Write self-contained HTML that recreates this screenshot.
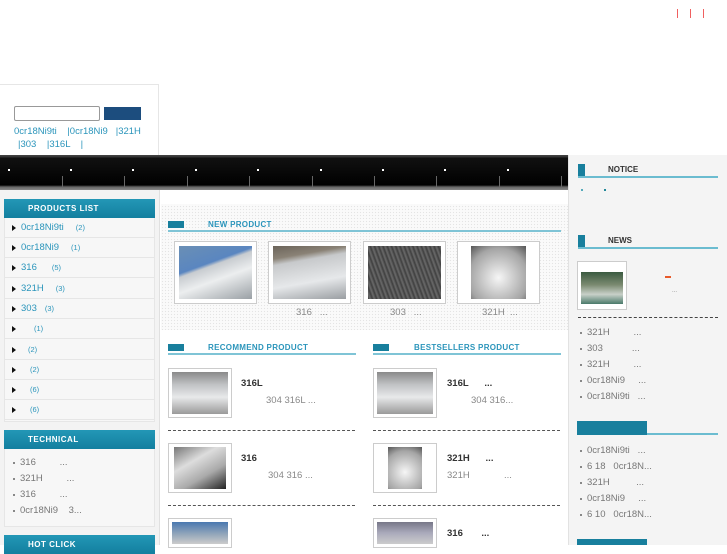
<!DOCTYPE html>
<html><head><meta charset="utf-8"><style>
*{margin:0;padding:0;box-sizing:border-box}
body{width:727px;height:545px;overflow:hidden;background:#fff;font-family:"Liberation Sans","Noto Sans CJK SC",sans-serif;font-size:9.5px;position:relative}
.a{position:absolute}
.t{color:#2b95bb}
.g{color:#888}
.hd{position:absolute;background:linear-gradient(#2397b6,#137f9f);color:#fff;font-weight:bold;font-size:8px;letter-spacing:.5px;padding-left:24px;line-height:19px;height:19px}
.row{position:absolute;left:5px;width:150px;height:20px;border-bottom:1px solid #e6e6e6;font-size:9.5px;line-height:20px}
.row:before{content:"";position:absolute;left:7px;top:7px;border-left:4px solid #111;border-top:3px solid transparent;border-bottom:3px solid transparent}
.li{position:absolute;color:#777;font-size:9.5px}
.li:before{content:"";position:absolute;left:-7px;top:5px;width:2px;height:2px;background:#888}
.sec{position:absolute;height:11px;border-bottom:2px solid #7fc4d6}
.sec b{position:absolute;left:0;top:0;width:16px;height:7px;background:#187f9d}
.sec span{position:absolute;top:-1px;font-size:8px;font-weight:bold;color:#2b95bb;letter-spacing:.3px}
.img{position:absolute;border:1px solid #ccc;background:#fff;padding:4px}
.img div{width:100%;height:100%}
.dash{position:absolute;height:0;border-top:1px dashed #555}
</style></head><body>
<div class="a" style="left:677px;top:9px;width:1px;height:9px;background:#f06060"></div>
<div class="a" style="left:690px;top:9px;width:1px;height:9px;background:#f06060"></div>
<div class="a" style="left:703px;top:9px;width:1px;height:9px;background:#f06060"></div>

<div class="a" style="left:0;top:84px;width:159px;height:72px;border:1px solid #e6e6e6;border-left:none;background:#fff"></div>
<div class="a" style="left:14px;top:106px;width:86px;height:15px;border:1px solid #999;border-radius:2px"></div>
<div class="a" style="left:104px;top:107px;width:37px;height:13px;background:#1c4d7e"></div>
<div class="a t" style="left:14px;top:126px;white-space:pre">0cr18Ni9ti    |0cr18Ni9   |321H</div>
<div class="a t" style="left:18px;top:139px;white-space:pre">|303    |316L    |</div>

<div class="a" style="left:0;top:155px;width:568px;height:35px;background:linear-gradient(#444 0,#333 2px,#111 3px,#000 30px,#666 32px,#888 35px)"></div>

<div class="a" style="left:568px;top:155px;width:159px;height:390px;background:#f4f4f4;border-left:1px solid #e2e2e2"></div>
<div class="a" style="left:0;top:190px;width:160px;height:355px;background:#f3f3f3;border-right:1px solid #e0e0e0"></div>
<div class="a" style="left:161px;top:190px;width:407px;height:140px;background-color:#fafafa;background-image:radial-gradient(#e4e4e4 0.7px,transparent 0.8px);background-size:3px 3px"></div>
<div class="a" style="left:161px;top:190px;width:407px;height:14px;background:#fff"></div>

<div class="hd" style="left:4px;top:199px;width:151px">PRODUCTS LIST</div>
<div class="a" style="left:4px;top:218px;width:151px;height:204px;background:#f7f7f7;border:1px solid #e6e6e6;border-top:none"></div>
<div class="row t" style="top:218px"><span style="margin-left:16px">0cr18Ni9ti</span><span style="margin-left:12px;font-size:7.5px">(2)</span></div>
<div class="row t" style="top:238px"><span style="margin-left:16px">0cr18Ni9</span><span style="margin-left:12px;font-size:7.5px">(1)</span></div>
<div class="row t" style="top:258px"><span style="margin-left:16px">316</span><span style="margin-left:15px;font-size:7.5px">(5)</span></div>
<div class="row t" style="top:279px"><span style="margin-left:16px">321H</span><span style="margin-left:12px;font-size:7.5px">(3)</span></div>
<div class="row t" style="top:299px"><span style="margin-left:16px">303</span><span style="margin-left:8px;font-size:7.5px">(3)</span></div>
<div class="row t" style="top:319px"><span style="margin-left:29px;font-size:7.5px">(1)</span></div>
<div class="row t" style="top:340px"><span style="margin-left:23px;font-size:7.5px">(2)</span></div>
<div class="row t" style="top:360px"><span style="margin-left:25px;font-size:7.5px">(2)</span></div>
<div class="row t" style="top:380px"><span style="margin-left:25px;font-size:7.5px">(6)</span></div>
<div class="row t" style="top:400px"><span style="margin-left:25px;font-size:7.5px">(6)</span></div>

<div class="hd" style="left:4px;top:430px;width:151px">TECHNICAL</div>
<div class="a" style="left:4px;top:449px;width:151px;height:78px;background:#f7f7f7;border:1px solid #e6e6e6;border-top:none"></div>
<div class="li" style="left:20px;top:457px;white-space:pre">316         ...</div>
<div class="li" style="left:20px;top:473px;white-space:pre">321H         ...</div>
<div class="li" style="left:20px;top:489px;white-space:pre">316         ...</div>
<div class="li" style="left:20px;top:505px;white-space:pre">0cr18Ni9    3...</div>
<div class="hd" style="left:4px;top:535px;width:151px">HOT CLICK</div>

<div class="sec" style="left:168px;top:221px;width:393px"><b></b><span style="left:40px">NEW PRODUCT</span></div>
<div class="img" style="left:174px;top:241px;width:83px;height:63px"><div style="background:linear-gradient(160deg,#6a8fb5 0,#5a86c0 35%,#c8ccd0 40%,#eceeef 60%,#9aa0a5 100%)"></div></div>
<div class="img" style="left:268px;top:241px;width:83px;height:63px"><div style="background:linear-gradient(170deg,#6b645a 0,#8a8276 20%,#c7c9cb 30%,#e6e8ea 65%,#9a9ea2 100%)"></div></div>
<div class="img" style="left:363px;top:241px;width:83px;height:63px"><div style="background:repeating-linear-gradient(70deg,#3a3a3a 0,#6a6a6a 2px,#444 4px),#555"></div></div>
<div class="img" style="left:457px;top:241px;width:83px;height:63px;padding:4px 13px"><div style="background:radial-gradient(circle at 50% 60%,#f6f6f6,#a5a5a5 70%,#555)"></div></div>
<div class="a g" style="left:296px;top:307px">316&nbsp;&nbsp;&nbsp;...</div>
<div class="a g" style="left:390px;top:307px">303&nbsp;&nbsp;&nbsp;...</div>
<div class="a g" style="left:482px;top:307px">321H&nbsp;&nbsp;...</div>

<div class="sec" style="left:168px;top:344px;width:188px"><b></b><span style="left:40px">RECOMMEND PRODUCT</span></div>
<div class="sec" style="left:373px;top:344px;width:188px"><b></b><span style="left:41px">BESTSELLERS PRODUCT</span></div>

<div class="img" style="left:168px;top:368px;width:64px;height:50px;padding:3px"><div style="background:linear-gradient(#8a8a8a 0,#c0c2c4 30%,#e8e9ea 60%,#9a9a9a 100%)"></div></div>
<div class="a" style="left:241px;top:378px;font-weight:bold;color:#333">316L</div>
<div class="a g" style="left:266px;top:395px">304 316L ...</div>
<div class="dash" style="left:168px;top:430px;width:187px"></div>
<div class="img" style="left:168px;top:443px;width:64px;height:50px;padding:3px 5px"><div style="background:linear-gradient(150deg,#777 0,#ddd 35%,#aaa 65%,#222 100%)"></div></div>
<div class="a" style="left:241px;top:453px;font-weight:bold;color:#333">316</div>
<div class="a g" style="left:268px;top:470px">304 316 ...</div>
<div class="dash" style="left:168px;top:505px;width:187px"></div>
<div class="img" style="left:168px;top:518px;width:64px;height:30px;padding:3px"><div style="background:linear-gradient(#4a78b0,#9ab 60%,#ccc)"></div></div>

<div class="img" style="left:373px;top:368px;width:64px;height:50px;padding:3px"><div style="background:linear-gradient(#8a8a8a 0,#c0c2c4 30%,#e8e9ea 60%,#9a9a9a 100%)"></div></div>
<div class="a" style="left:447px;top:378px;font-weight:bold;color:#333;white-space:pre">316L      ...</div>
<div class="a g" style="left:471px;top:395px">304 316...</div>
<div class="dash" style="left:373px;top:430px;width:187px"></div>
<div class="img" style="left:373px;top:443px;width:64px;height:50px;padding:3px 14px"><div style="background:radial-gradient(circle at 50% 60%,#f6f6f6,#a5a5a5 70%,#555)"></div></div>
<div class="a" style="left:447px;top:453px;font-weight:bold;color:#333;white-space:pre">321H      ...</div>
<div class="a g" style="left:447px;top:470px;white-space:pre">321H             ...</div>
<div class="dash" style="left:373px;top:505px;width:187px"></div>
<div class="img" style="left:373px;top:518px;width:64px;height:30px;padding:3px"><div style="background:linear-gradient(#778,#aab 50%,#ccc)"></div></div>
<div class="a" style="left:447px;top:528px;font-weight:bold;color:#333;white-space:pre">316       ...</div>

<div class="a" style="left:578px;top:164px;width:7px;height:13px;background:#187f9d"></div>
<div class="a" style="left:578px;top:176px;width:140px;height:2px;background:#6bbcd0"></div>
<div class="a" style="left:608px;top:165px;font-size:8px;font-weight:bold;color:#333">NOTICE</div>
<div class="a" style="left:581px;top:189px;width:2px;height:2px;background:#5ab"></div>
<div class="a" style="left:604px;top:189px;width:2px;height:2px;background:#289"></div>
<div class="a" style="left:578px;top:235px;width:7px;height:13px;background:#187f9d"></div>
<div class="a" style="left:578px;top:247px;width:140px;height:2px;background:#6bbcd0"></div>
<div class="a" style="left:608px;top:236px;font-size:8px;font-weight:bold;color:#333">NEWS</div>
<div class="img" style="left:577px;top:261px;width:50px;height:49px;padding:10px 3px 5px"><div style="background:linear-gradient(#3a5a40,#7a8a70 40%,#c8d0c8 70%,#4a7a6a)"></div></div>
<div class="a" style="left:665px;top:276px;width:6px;height:2px;background:#e85a2a"></div>
<div class="a g" style="left:672px;top:288px;font-size:6px">...</div>
<div class="dash" style="left:578px;top:317px;width:140px;border-top-color:#444"></div>
<div class="li" style="left:587px;top:327px;white-space:pre">321H         ...</div>
<div class="li" style="left:587px;top:343px;white-space:pre">303           ...</div>
<div class="li" style="left:587px;top:359px;white-space:pre">321H         ...</div>
<div class="li" style="left:587px;top:375px;white-space:pre">0cr18Ni9     ...</div>
<div class="li" style="left:587px;top:391px;white-space:pre">0cr18Ni9ti   ...</div>
<div class="a" style="left:577px;top:421px;width:70px;height:14px;background:#187f9d"></div>
<div class="a" style="left:647px;top:433px;width:71px;height:2px;background:#6bbcd0"></div>
<div class="li" style="left:587px;top:445px;white-space:pre">0cr18Ni9ti   ...</div>
<div class="li" style="left:587px;top:461px;white-space:pre">6 18   0cr18N...</div>
<div class="li" style="left:587px;top:477px;white-space:pre">321H          ...</div>
<div class="li" style="left:587px;top:493px;white-space:pre">0cr18Ni9     ...</div>
<div class="li" style="left:587px;top:509px;white-space:pre">6 10   0cr18N...</div>
<div class="a" style="left:577px;top:539px;width:70px;height:6px;background:#187f9d"></div>

<div class="a" style="left:8px;top:169px;width:2px;height:2px;background:#fff"></div>
<div class="a" style="left:70px;top:169px;width:2px;height:2px;background:#fff"></div>
<div class="a" style="left:132px;top:169px;width:2px;height:2px;background:#fff"></div>
<div class="a" style="left:195px;top:169px;width:2px;height:2px;background:#fff"></div>
<div class="a" style="left:257px;top:169px;width:2px;height:2px;background:#fff"></div>
<div class="a" style="left:320px;top:169px;width:2px;height:2px;background:#fff"></div>
<div class="a" style="left:382px;top:169px;width:2px;height:2px;background:#fff"></div>
<div class="a" style="left:444px;top:169px;width:2px;height:2px;background:#fff"></div>
<div class="a" style="left:507px;top:169px;width:2px;height:2px;background:#fff"></div>
<div class="a" style="left:62px;top:176px;width:1px;height:11px;background:#666"></div>
<div class="a" style="left:124px;top:176px;width:1px;height:11px;background:#666"></div>
<div class="a" style="left:187px;top:176px;width:1px;height:11px;background:#666"></div>
<div class="a" style="left:249px;top:176px;width:1px;height:11px;background:#666"></div>
<div class="a" style="left:312px;top:176px;width:1px;height:11px;background:#666"></div>
<div class="a" style="left:374px;top:176px;width:1px;height:11px;background:#666"></div>
<div class="a" style="left:436px;top:176px;width:1px;height:11px;background:#666"></div>
<div class="a" style="left:499px;top:176px;width:1px;height:11px;background:#666"></div>
<div class="a" style="left:561px;top:176px;width:1px;height:11px;background:#666"></div>
</body></html>
